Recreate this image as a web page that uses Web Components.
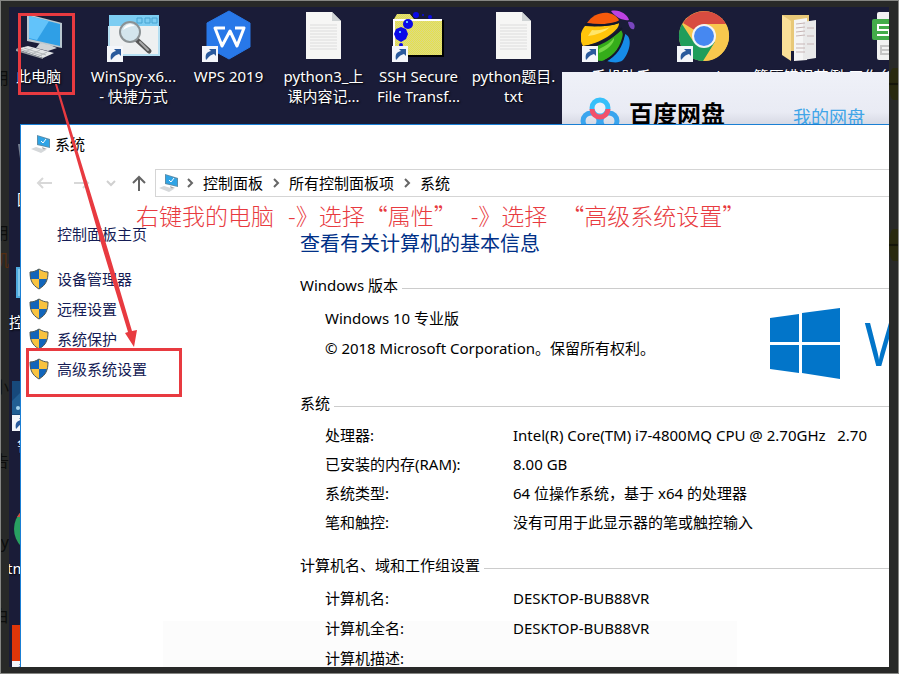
<!DOCTYPE html>
<html lang="zh-CN">
<head>
<meta charset="utf-8">
<title>系统</title>
<style>
  body {
    margin: 0;
    font-family: 'Noto Sans', 'Noto Sans CJK SC', sans-serif;
    font-size: 15px;
    line-height: 20px;
    color: #000;
  }
</style>
</head>
<body>
<screen-frame>
  <desk-top>
    <icon-grid slot="icons"></icon-grid>
    <netdisk-window slot="netdisk"></netdisk-window>
    <system-window slot="system"></system-window>
  </desk-top>
</screen-frame>
<guide-marks></guide-marks>

<script>
const badge = `
  <rect x="1" y="36" width="16" height="16" fill="#f4f6fa"/>
  <path d="M5 50c-1-5 0-8 5-9l-2-2h7v7l-2-2c-4 1-5 3-8 6z" fill="#2a5a9c"/>`;

const pcArt = `
  <path d="M16 4l35 9v25l-35-7z" fill="#b9c7cf"/>
  <path d="M18 6l31 8v22l-31-7z" fill="#2f9fe6"/>
  <path d="M18 6l20 5-12 19-8-2z" fill="#62c3fa"/>
  <path d="M29 33l10 2 7 3-9 3-12-3z" fill="#cfd3d6"/>
  <path d="M5 39l12-3 26 7-11 5z" fill="#e4e6e8"/>
  <path d="M5 39l27 9v1L5 41z" fill="#9a9fa3"/>
  <path d="M9 39l22 7M13 38l22 7M22 38l-8 4M29 40l-8 4M36 42l-8 4" stroke="#b4b8bb" fill="none"/>`;

const txtArt = `
  <path d="M10 2h26l9 9v38H10z" fill="#f6f6f5"/>
  <path d="M36 2v9h9z" fill="#cfd3d4"/>
  <path d="M14 15h27M14 18h27M14 21h27M14 24h27M14 27h27M14 30h27M14 33h27M14 36h27M14 39h27" stroke="#dcdcdc"/>`;

const art = {
  pc: pcArt,
  winspy: `
    <rect x="3" y="5" width="50" height="40" fill="#eef0f1"/>
    <rect x="3" y="5" width="50" height="11" fill="#7dcdf2"/>
    <path d="M31 8h5v5h-5zM39 8h5v5h-5zM46 8h5v5h-5z" fill="none" stroke="#48a4d2"/>
    <path d="M3 16v29h50V16" fill="none" stroke="#b5dff2" stroke-width="2"/>
    <path d="M31 30l12 11" stroke="#555" stroke-width="5" stroke-linecap="round"/>
    <path d="M34 32l8 8" stroke="#aaa" stroke-width="2" stroke-linecap="round"/>
    <circle cx="24" cy="22" r="10" fill="#d3e5ed" stroke="#8b9295" stroke-width="2"/>
    <path d="M17 20c2-6 8-7 12-4-5 0-9 2-12 4z" fill="#fff"/>${badge}`,
  wps: `
    <path d="M28 1l21 12v24L28 49 6 37V13z" fill="#2878e8" stroke="#2878e8" stroke-width="1" stroke-linejoin="round"/>
    <path d="M24 18H14l7 18 8-15 7 15 7-18h-9" fill="none" stroke="#fff" stroke-width="3" stroke-linejoin="round"/>${badge}`,
  txt: txtArt,
  ssh: `
    <defs><pattern id="weave" width="2" height="2" patternUnits="userSpaceOnUse">
      <path d="M0 0h2v2H0z" fill="#e6e24a"/><path d="M0 0h1v1H0zM1 1h1v1H1z" fill="#dcd988"/>
    </pattern></defs>
    <path d="M4 47V10l3-6h13l4 6h29v37z" fill="#000"/>
    <path d="M3 45V9l3-5h13l4 5h28v36z" fill="url(#weave)"/>
    <path d="M3 45V10h48" fill="none" stroke="#fff" stroke-width="2"/>
    <g fill="#0a0ae8"><path d="M5 19l5-2 5 2 2 5-2 5-5 3-5-3-2-5z"/><circle cx="17" cy="14" r="5"/>
    <circle cx="25" cy="5" r="3"/><circle cx="32" cy="5" r="1"/><circle cx="39" cy="7" r="2"/><circle cx="10" cy="35" r="2"/></g>
    <path d="M8 21h2v2H8zM15 11h2v2h-2z" fill="#6bf"/>${badge}`,
  helper: `
    <path d="M6 13C14 1 31-1 38 10c-2 4-18 5-32 3z" fill="#f65a0b"/>
    <path d="M4 16c13 1 26 0 34-3 1 8-19 21-36 23-4-6-3-14 2-20z" fill="#ffc50b"/>
    <path d="M40 20c7 10-5 26-19 31-8 0-15-5-17-12 15-2 27-10 36-19z" fill="#35ad1a"/>
    <path d="M44 24c8 3 5 18-2 26-5 4-12 2-16 1 7-5 15-15 18-27z" fill="#168ce8"/>
    <path d="M30 1c8-2 16 3 18 9-5 1-13-2-18-9z" fill="#bd43e1"/>
    <path d="M47 12c5-1 8 3 6 7-3 1-5-2-6-7z" fill="#7946bd"/>
    <path d="M11 20c7 1 13-1 18-3-5 5-14 8-22 9z" fill="#ffe66a"/>
    <path d="M18 39c7-3 12-7 15-11 1 5-8 13-15 15z" fill="#73d746"/>
    <path d="M4 14c13 2 26 1 34-2M3 37c16-2 29-10 38-19M24 51c10-5 17-15 19-27" fill="none" stroke="#15182c" stroke-width="2"/>${badge}`,
  chrome: `
    <circle cx="28" cy="26" r="25" fill="#f8c84e"/>
    <path d="M28 26L7 13A25 25 0 0 1 50 14H28z" fill="#d84c40"/>
    <path d="M6 14a25 25 0 0 0 21 37l12-19-11-6-11 5z" fill="#1f9d5b"/>
    <path d="M39 32L28 51a25 25 0 0 0 22-37H28z" fill="#f8c84e"/>
    <circle cx="28" cy="26" r="12" fill="#f4f4f4"/><circle cx="28" cy="26" r="10" fill="#4688f1"/>${badge}`,
  folder: `
    <path d="M11 5h27v36H20z" fill="#e8c878"/>
    <path d="M23 10l13-2v42l-13 1z" fill="#f5f5f5"/><path d="M32 12l13-2v38l-13 2z" fill="#e9e9e9"/>
    <path d="M25 14l9-1M25 18l9-1M25 22l9-1M25 26l9-1M25 34h9M25 38h9M25 42h9M36 18h7M36 26h7M36 34h7" stroke="#c7b5b5"/>
    <path d="M11 5l9 6v40l-9-6z" fill="#fadf98"/>`,
  sheet: `
    <rect x="11" y="2" width="36" height="48" rx="2" fill="#f2f2f2"/>
    <rect x="6" y="9" width="26" height="21" rx="2" fill="#43ac4a"/>
    <path d="M24 15H12v5h11v5H11" fill="none" stroke="#fff" stroke-width="2"/>
    <path d="M26 36H15v8h11M15 40h11" fill="none" stroke="#c5c5c5" stroke-width="2"/>`,
  bin: `<path d="M7 11h40l-5 36H12z" fill="#747e90"/>`,
  panel: `<rect x="5" y="11" width="46" height="31" fill="#4eaade"/><path d="M7 13h42v27H7z" fill="#83c9ed"/>`,
  master: `<rect x="1" y="2" width="50" height="49" fill="#17497b"/><path d="M1 22l15-15v28H1z" fill="#225f93"/><circle cx="7" cy="29" r="2" fill="#a5d5ef"/>${badge}`,
  green: `<circle cx="28" cy="27" r="25" fill="#28a061"/><path d="M6 15A25 25 0 0 1 50 15H28z" fill="#d84c40"/>`,
  red: `<rect x="1" y="0" width="50" height="38" fill="#e03609"/>${badge}`,
};

const pcSmall = size => `<svg width="${size}" height="${size}" viewBox="0 0 20 20">
  <path d="M6 1l13 4v9L6 11z" fill="#5d8ea9"/><path d="M7 2l11 4v7L7 10z" fill="#2fa4e6"/>
  <path d="M10 7l2 2 3-4" fill="none" stroke="#fff"/>
  <path d="M11 13l5 2-4 1z" fill="#aaa"/><path d="M0 15l5-2 10 3-5 3z" fill="#d5d8da"/></svg>`;

class ScreenFrame extends HTMLElement {
  connectedCallback() {
    this.attachShadow({ mode: 'open' });
    this.shadowRoot.innerHTML = `
      <style>
        :host {
          display: flex;
          position: relative;
          box-sizing: border-box;
          height: 100vh;
          overflow: hidden;
          padding: 6px 9px 6px 8px;
          border: 1px solid #858683;
          background: #282928;
        }
        slot { display: block; flex: 1; min-width: 0; }
        /* what shows dimly through the border */
        i {
          position: absolute;
          right: calc(100% - 8px);
          color: #0c0d0c;
          font-style: normal;
          font-size: 16px;
        }
        .rust { color: #542c10; }
        b {
          position: absolute;
          right: 0;
          width: 9px;
          height: 32px;
          border-radius: 50% 0 0 50%;
          background: linear-gradient(#29290f 45%, #0d0d08, #29290f 55%);
        }
      </style>
      <i style="top: 10%">用</i>
      <i style="top: 33%">用</i>
      <i class="rust" style="top: 37%">机</i>
      <i style="top: 56%">小</i>
      <i style="top: 67%">告</i>
      <i style="top: 79%">y</i>
      <i style="top: 90%">白</i>
      <b style="top: 10%"></b>
      <b style="top: 34%"></b>
      <slot></slot>
    `;
  }
}
customElements.define('screen-frame', ScreenFrame);

class DeskTop extends HTMLElement {
  connectedCallback() {
    this.attachShadow({ mode: 'open' });
    this.shadowRoot.innerHTML = `
      <style>
        :host {
          display: block;
          position: relative;
          height: 100%;
          overflow: hidden;
          background: #1a1c38;
        }
        ::slotted(netdisk-window) { position: absolute; left: 553px; right: 0; top: 65px; }
        ::slotted(system-window) { position: absolute; left: 11px; right: 0; top: 117px; bottom: 0; }
      </style>
      <slot name="icons"></slot>
      <slot name="netdisk"></slot>
      <slot name="system"></slot>
    `;
  }
}
customElements.define('desk-top', DeskTop);

class DesktopIcon extends HTMLElement {
  connectedCallback() {
    this.attachShadow({ mode: 'open' });
    this.shadowRoot.innerHTML = `
      <style>
        :host {
          display: flex;
          flex-direction: column;
          align-items: center;
          padding-top: 3px;
          color: #fff;
          text-align: center;
          text-shadow: 1px 1px 2px #000;
        }
        svg { display: block; flex: none; }
        span { white-space: pre; }
        :host([edge]) span { align-self: flex-start; padding-left: var(--edge, 18px); }
      </style>
      <svg width="56" height="56" viewBox="0 0 56 56">${art[this.getAttribute('art')]}</svg>
      <span><slot></slot></span>
    `;
  }
}
customElements.define('desktop-icon', DesktopIcon);

class IconGrid extends HTMLElement {
  connectedCallback() {
    this.attachShadow({ mode: 'open' });
    this.shadowRoot.innerHTML = `
      <style>
        :host {
          display: grid;
          grid-template-columns: repeat(10, 95px);
          grid-auto-rows: 123px;
          margin-left: -18px;
        }
        [edge] { grid-column: 1; }
        .mid { --edge: 26px; }
        .cut { --edge: 16px; }
      </style>
      <desktop-icon art="pc">此电脑</desktop-icon>
      <desktop-icon art="winspy">WinSpy-x6...\n- 快捷方式</desktop-icon>
      <desktop-icon art="wps">WPS 2019</desktop-icon>
      <desktop-icon art="txt">python3_上\n课内容记...</desktop-icon>
      <desktop-icon art="ssh">SSH Secure\nFile Transf...</desktop-icon>
      <desktop-icon art="txt">python题目.\ntxt</desktop-icon>
      <desktop-icon art="helper">360手机助手</desktop-icon>
      <desktop-icon art="chrome">Google</desktop-icon>
      <desktop-icon art="folder">管压错误范例</desktop-icon>
      <desktop-icon art="sheet">工作台工作台</desktop-icon>
      <desktop-icon edge class="mid" art="bin">回</desktop-icon>
      <desktop-icon edge art="panel">控</desktop-icon>
      <desktop-icon edge class="mid" art="master">鲁</desktop-icon>
      <desktop-icon edge class="cut" art="green">tm</desktop-icon>
      <desktop-icon edge art="red"></desktop-icon>
    `;
  }
}
customElements.define('icon-grid', IconGrid);

class NetdiskWindow extends HTMLElement {
  connectedCallback() {
    this.attachShadow({ mode: 'open' });
    this.shadowRoot.innerHTML = `
      <style>
        :host {
          display: flex;
          align-items: flex-start;
          box-sizing: border-box;
          height: 80px;
          padding: 25px 0 0 18px;
          background: linear-gradient(#eff1f8, #e9ebf4 40px, #d4d7e2 54px);
        }
        strong { margin: 3px 0 0 9px; font-size: 24px; line-height: 28px; }
        a { margin: 10px 0 0 68px; color: #40a5e8; font-size: 18px; text-decoration: none; }
      </style>
      <svg width="40" height="40" viewBox="0 0 40 40" fill="none" stroke-width="5">
        <circle cx="11" cy="24" r="8" stroke="#3aa5ee"/><circle cx="29" cy="24" r="8" stroke="#3aa5ee"/>
        <circle cx="20" cy="11" r="8" fill="#eef0f8" stroke="#37c0fa"/>
        <path d="M12 12a8 8 0 0 0 16 0" stroke="#f2506b"/>
      </svg>
      <strong>百度网盘</strong>
      <a href="#netdisk">我的网盘</a>
    `;
  }
}
customElements.define('netdisk-window', NetdiskWindow);

class CrumbBar extends HTMLElement {
  connectedCallback() {
    this.attachShadow({ mode: 'open' });
    const sep = '<svg width="8" height="12" viewBox="0 0 8 12"><path d="M2 2l4 4-4 4" fill="none" stroke="#666" stroke-width="2"/></svg>';
    this.shadowRoot.innerHTML = `
      <style>
        :host { display: flex; align-items: center; padding: 6px 0 6px 14px; }
        button { display: flex; padding: 0; border: 0; background: none; }
        .next { margin-left: 20px; }
        .up { margin-left: 14px; }
        nav {
          display: flex;
          flex: 1;
          align-items: center;
          box-sizing: border-box;
          height: 28px;
          margin-left: 8px;
          padding-left: 3px;
          border: 1px solid #d5d5d5;
          border-right: 0;
          white-space: nowrap;
        }
        nav > svg { flex: none; margin: 0 9px; }
        nav > svg:first-child { margin: 0; }
        nav > svg:first-child + svg { margin-left: 7px; }
        a { color: #000; text-decoration: none; }
      </style>
      <button aria-label="后退"><svg width="18" height="16" viewBox="0 0 18 16" fill="none" stroke="#d8d8d8" stroke-width="2"><path d="M17 8H3M8 3L3 8l5 5"/></svg></button>
      <button class="next" aria-label="前进"><svg width="18" height="16" viewBox="0 0 18 16" fill="none" stroke="#d8d8d8" stroke-width="2"><path d="M1 8h14M10 3l5 5-5 5"/></svg></button>
      <button class="up" aria-label="最近"><svg width="12" height="16" viewBox="0 0 12 16" fill="none" stroke="#d0d0d0" stroke-width="2"><path d="M2 6l4 4 4-4"/></svg></button>
      <button class="up" aria-label="上移"><svg width="16" height="18" viewBox="0 0 16 18" fill="none" stroke="#646464" stroke-width="2"><path d="M8 17V3M2 9l6-6 6 6"/></svg></button>
      <nav>
        ${pcSmall(20)}${sep}<a href="#panel">控制面板</a>${sep}<a href="#all">所有控制面板项</a>${sep}<a href="#system">系统</a>
      </nav>
    `;
  }
}
customElements.define('crumb-bar', CrumbBar);

class TaskLinks extends HTMLElement {
  connectedCallback() {
    this.attachShadow({ mode: 'open' });
    const shield = `<svg width="20" height="22" viewBox="0 0 20 22">
      <path d="M10 1c3 2 6 3 9 3 0 8-2 13-9 17C3 17 1 12 1 4c3 0 6-1 9-3z" fill="#f8c340"/>
      <path d="M10 1v10H1C1 9 1 7 1 4c3 0 6-1 9-3zM10 11h8c-1 4-3 7-8 10z" fill="#1265ba"/>
      <path d="M10 1c3 2 6 3 9 3 0 8-2 13-9 17C3 17 1 12 1 4c3 0 6-1 9-3z" fill="none" stroke="#4e5a5c" stroke-width="1"/></svg>`;
    const links = ['设备管理器', '远程设置', '系统保护', '高级系统设置'];
    this.shadowRoot.innerHTML = `
      <style>
        :host { display: block; padding-top: 21px; }
        a { display: flex; align-items: center; color: #151c55; text-decoration: none; }
        .home { margin: 0 0 20px 36px; }
        ul { margin: 0; padding: 0 0 0 8px; list-style: none; }
        li a { height: 30px; gap: 8px; }
      </style>
      <a class="home" href="#home">控制面板主页</a>
      <ul>${links.map(t => `<li><a href="#${t}">${shield}${t}</a></li>`).join('')}</ul>
    `;
  }
}
customElements.define('task-links', TaskLinks);

class InfoSection extends HTMLElement {
  connectedCallback() {
    this.attachShadow({ mode: 'open' });
    this.shadowRoot.innerHTML = `
      <style>
        :host { display: block; margin-bottom: 18px; white-space: nowrap; }
        h2 {
          display: flex;
          align-items: center;
          gap: 4px;
          margin: 0 0 8px;
          font-size: 15px;
          font-weight: 400;
        }
        h2::after { content: ''; flex: 1; height: 1px; margin-top: 6px; background: #ccc; }
        div { padding-left: 25px; }
      </style>
      <h2>${this.getAttribute('heading')}</h2>
      <div><slot></slot></div>
    `;
  }
}
customElements.define('info-section', InfoSection);

class SystemInfo extends HTMLElement {
  connectedCallback() {
    this.attachShadow({ mode: 'open' });
    this.shadowRoot.innerHTML = `
      <style>
        :host { display: block; padding-top: 27px; }
        h1 { margin: 0 0 17px; color: #003087; font-size: 20px; font-weight: 400; line-height: 28px; }
        p { margin: 0; line-height: 30px; }
        .version { display: grid; grid-template-columns: 445px auto; height: 72px; }
        .brand { display: flex; gap: 24px; color: #0275c9; font: 400 60px/80px 'Open Sans', sans-serif; }
        svg { flex: none; overflow: visible; }
        dl { display: grid; grid-template-columns: 188px 1fr; margin: 0; line-height: 29px; }
        dl.wide { line-height: 30px; }
        dd { margin: 0; white-space: pre; }
      </style>
      <h1>查看有关计算机的基本信息</h1>
      <info-section heading="Windows 版本">
        <section class="version">
          <section>
            <p>Windows 10 专业版</p>
            <p>© 2018 Microsoft Corporation。保留所有权利。</p>
          </section>
          <section class="brand">
            <svg width="70" height="72" viewBox="0 0 70 72"><path d="M0 15l29-4v28H0zM32 10l38-5v34H32zM0 42h29v28L0 66zM32 42h38v34l-38-6z" fill="#0275c9"/></svg>
            <span>W</span>
          </section>
        </section>
      </info-section>
      <info-section heading="系统">
        <dl>
          <dt>处理器:</dt><dd>Intel(R) Core(TM) i7-4800MQ CPU @ 2.70GHz   2.70</dd>
          <dt>已安装的内存(RAM):</dt><dd>8.00 GB</dd>
          <dt>系统类型:</dt><dd>64 位操作系统，基于 x64 的处理器</dd>
          <dt>笔和触控:</dt><dd>没有可用于此显示器的笔或触控输入</dd>
        </dl>
      </info-section>
      <info-section heading="计算机名、域和工作组设置">
        <dl class="wide">
          <dt>计算机名:</dt><dd>DESKTOP-BUB88VR</dd>
          <dt>计算机全名:</dt><dd>DESKTOP-BUB88VR</dd>
          <dt>计算机描述:</dt><dd></dd>
        </dl>
      </info-section>
    `;
  }
}
customElements.define('system-info', SystemInfo);

class SystemWindow extends HTMLElement {
  connectedCallback() {
    this.attachShadow({ mode: 'open' });
    this.shadowRoot.innerHTML = `
      <style>
        :host {
          display: block;
          overflow: hidden;
          border: 1px solid #1a7fd4;
          border-width: 1px 0 0 1px;
          background: linear-gradient(#fcfcfc, #fcfcfc) 142px 100% / 574px 46px no-repeat #fff;
        }
        header { display: flex; align-items: center; gap: 4px; height: 38px; padding-left: 10px; }
        main { display: grid; grid-template-columns: 279px minmax(0, 1fr); }
      </style>
      <header>${pcSmall(20)}<span>系统</span></header>
      <crumb-bar></crumb-bar>
      <main>
        <task-links></task-links>
        <system-info></system-info>
      </main>
    `;
  }
}
customElements.define('system-window', SystemWindow);

// red boxes, arrow and note drawn over the screen
class GuideMarks extends HTMLElement {
  connectedCallback() {
    this.attachShadow({ mode: 'open' });
    this.shadowRoot.innerHTML = `
      <style>
        :host { position: absolute; left: 0; top: 0; pointer-events: none; }
        svg { display: block; }
        p {
          display: flex;
          gap: 14px;
          position: absolute;
          left: 136px;
          top: 203px;
          margin: 0;
          color: #e83a40;
          font: 300 23px/24px 'Noto Sans CJK SC', sans-serif;
          white-space: nowrap;
        }
      </style>
      <svg width="200" height="400" viewBox="0 0 200 400" fill="#e83a40">
        <path fill-rule="evenodd" d="M18 13h57v82H18zM21 16v76h51V16zM26 348h156v49H26zM29 351v43h150v-43z"/>
        <path d="M55 84l2 0 51 166 24 81 5-1-3 17-9-14 3-1-25-82z"/>
      </svg>
      <p><span>右键我的电脑</span> <span>-》选择“属性”</span> <span>-》选择</span> <span>“高级系统设置”</span></p>
    `;
  }
}
customElements.define('guide-marks', GuideMarks);
</script>
</body>
</html>
